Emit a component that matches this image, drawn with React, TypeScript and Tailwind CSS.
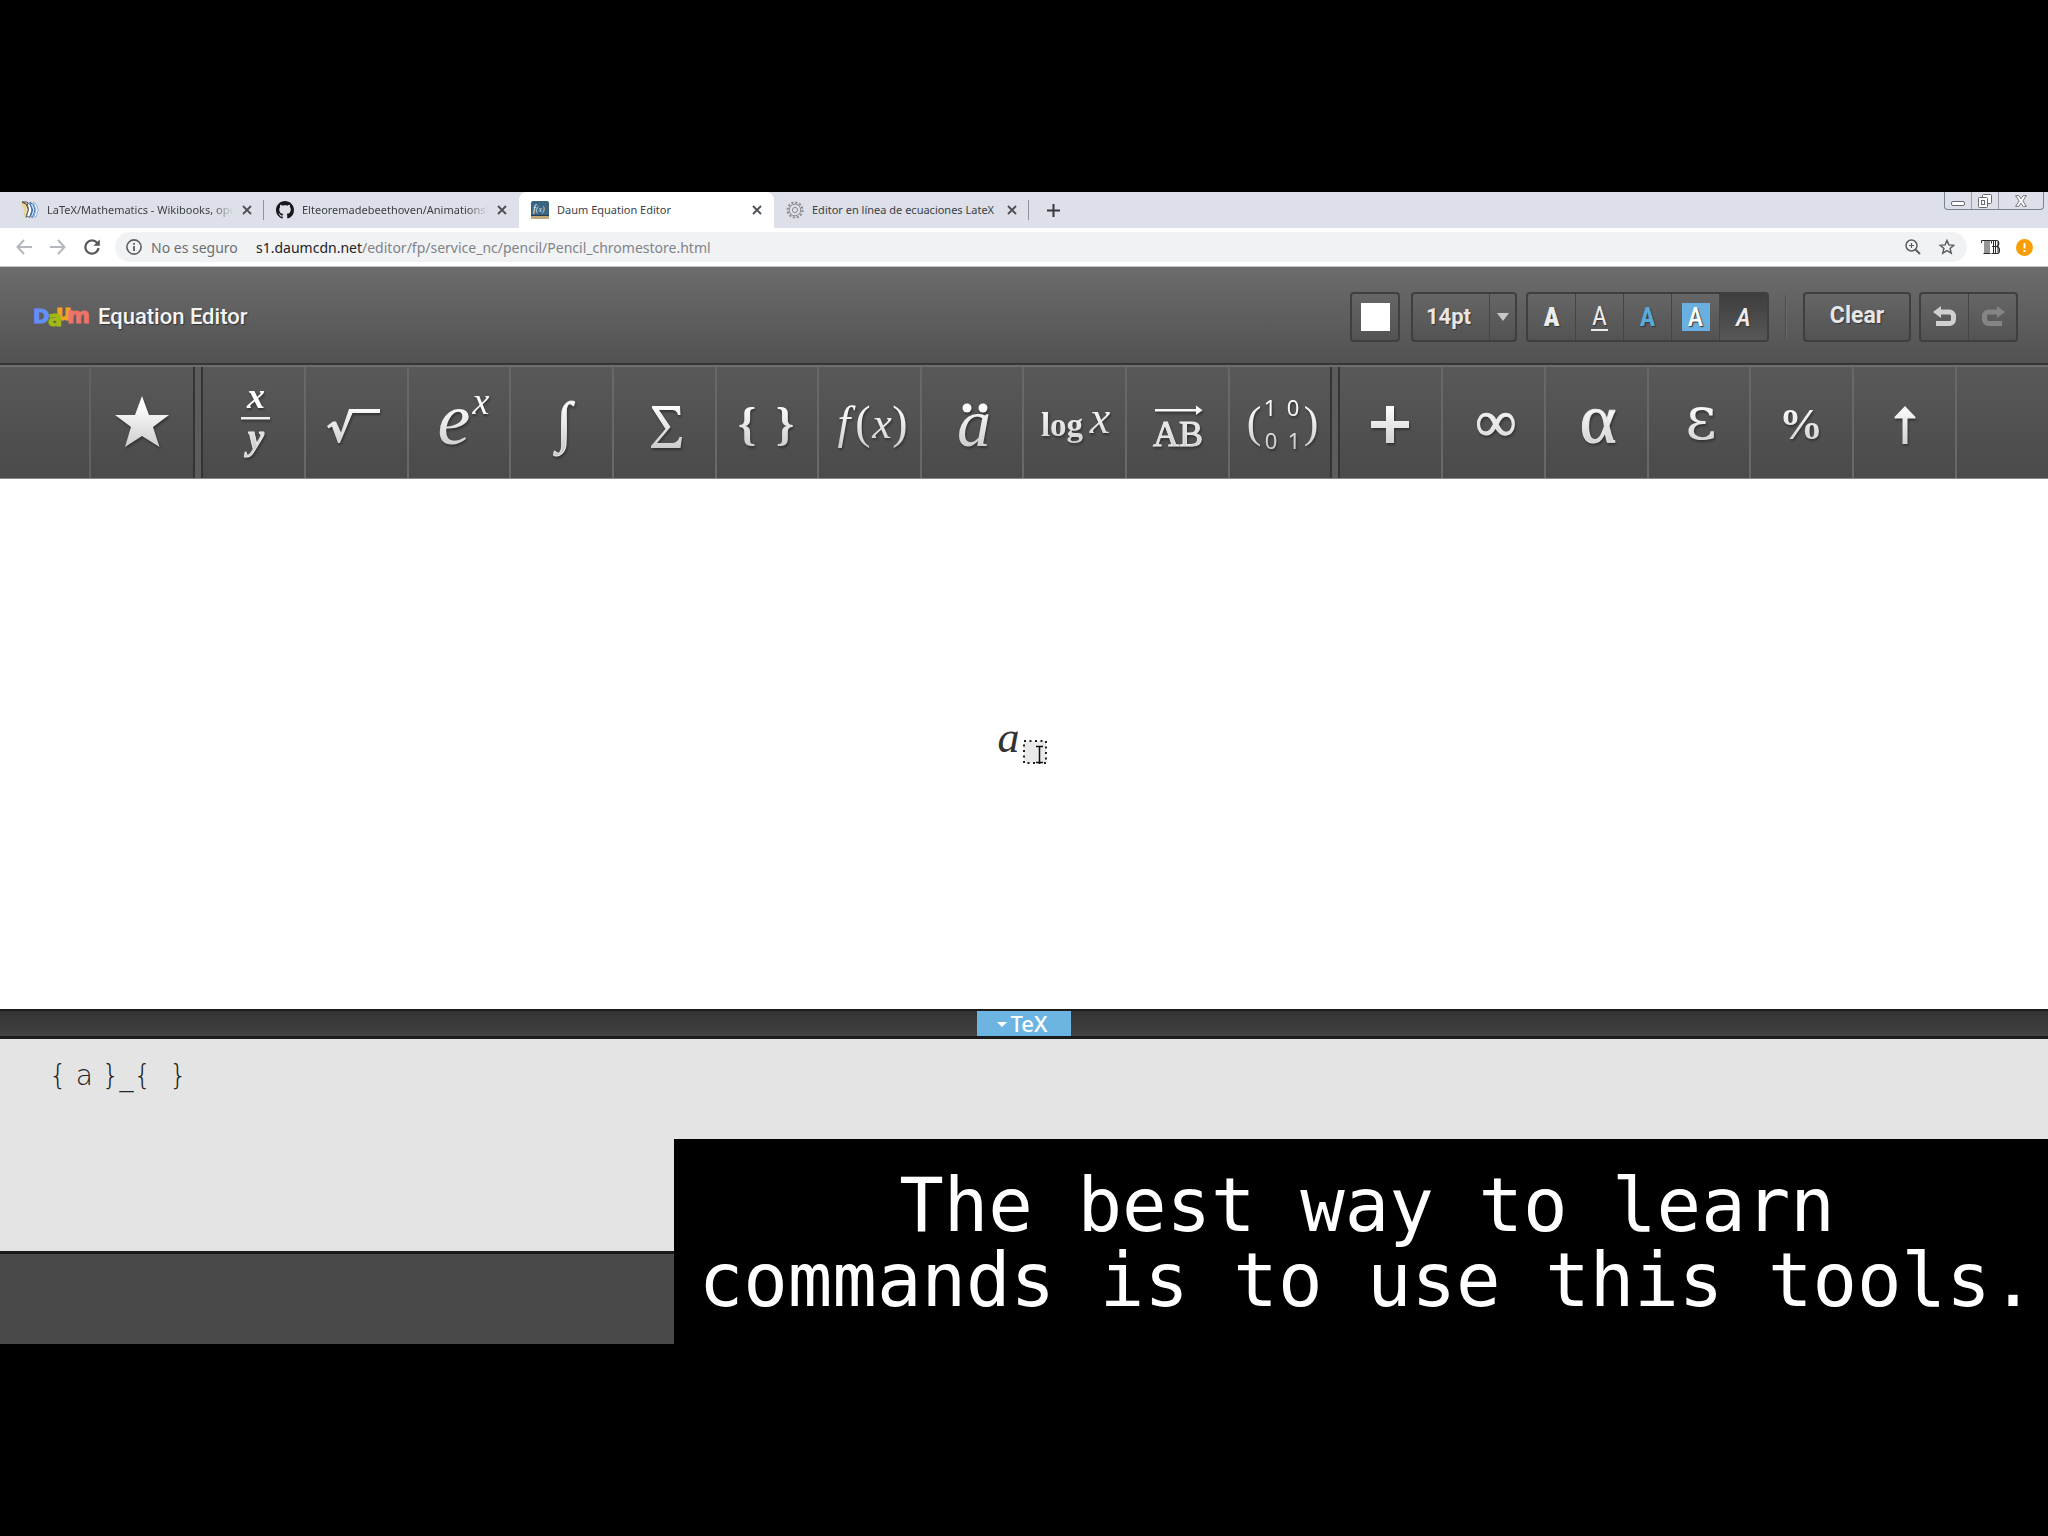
import React, { useState } from 'react';

const UI = "font-['Noto_Sans',sans-serif]";
const SERIF = "'Liberation Serif', serif";

/* ---------- browser chrome icons ---------- */

function WikibooksIcon() {
  return (
    <svg className="h-[18px] w-[18px] shrink-0" viewBox="0 0 18 18" fill="none">
      <path d="M0 1.500h5l1 4-1 4 2 4-1 3.500-3.500-2.500 1-3.500-1.500-4z" fill="#ecd592" />
      <path d="M1 1l4.500 2.500L7.500 9 5 16.500M1 1h4.500" stroke="#3c3a32" strokeWidth="1" />
      <path d="M6 1l3.500 3 1.500 5-2.500 7.500-3-2 2-5.500z" fill="#ffffff" stroke="#4b5a6a" strokeWidth="1" />
      <path d="M9 1l3.500 3 1.500 5-2.500 7.500-2-1 2.200-6.500-2-5z" fill="#cfe3f7" stroke="#3f6ea3" strokeWidth="1" />
      <path d="M12.500 1l3 3 1.700 5-2.400 7.500-1.800-1 2-6.500-1.700-5z" fill="#ffffff" stroke="#7fb2e5" strokeWidth="1" />
    </svg>
  );
}

function GithubIcon() {
  return (
    <svg className="h-[18px] w-[18px] shrink-0" viewBox="0 0 16 16" fill="#16181c">
      <path d="M8 0C3.580 0 0 3.580 0 8c0 3.540 2.290 6.530 5.470 7.590.4.070.55-.17.55-.38 0-.19-.01-.82-.01-1.490-2.010.37-2.530-.49-2.690-.94-.09-.23-.48-.94-.82-1.130-.28-.15-.68-.52-.01-.53.63-.01 1.080.58 1.230.82.72 1.210 1.870.87 2.330.66.07-.52.28-.87.51-1.070-1.780-.2-3.640-.89-3.640-3.950 0-.87.31-1.590.82-2.150-.08-.2-.36-1.020.08-2.120 0 0 .67-.21 2.200.82.64-.18 1.320-.27 2-.27s1.360.09 2 .27c1.530-1.040 2.200-.82 2.200-.82.44 1.100.16 1.920.08 2.120.51.56.82 1.270.82 2.150 0 3.070-1.870 3.750-3.650 3.950.29.25.54.73.54 1.480 0 1.070-.01 1.930-.01 2.200 0 .21.15.46.55.38A8.010 8.010 0 0 0 16 8c0-4.420-3.580-8-8-8z" />
    </svg>
  );
}

function FunctionIcon() {
  return (
    <svg className="h-[18px] w-[18px] shrink-0" viewBox="0 0 18 18">
      <rect width="18" height="18" rx="2" fill="#3a6580" />
      <rect y="14" width="18" height="1" fill="#243e50" />
      <rect y="15" width="18" height="3" rx="1" fill="#c0a878" />
      <text x="2" y="11" fontFamily={SERIF} fontStyle="italic" fontSize="10" fill="#ffffff">
        f<tspan fontSize="8" fill="#dfe8ee">(x)</tspan>
      </text>
    </svg>
  );
}

function GearIcon() {
  return (
    <svg className="h-[18px] w-[18px] shrink-0" viewBox="0 0 18 18" fill="none" stroke="#8b8d92">
      <circle cx="9" cy="9" r="7.500" strokeWidth="2" strokeDasharray="2.200 1.727" />
      <circle cx="9" cy="9" r="5.800" strokeWidth="1" />
      <circle cx="9" cy="9" r="2.600" strokeWidth="1" />
    </svg>
  );
}

function Cross() {
  return (
    <svg className="h-[10px] w-[10px]" viewBox="0 0 10 10" stroke="#4c4f54" strokeWidth="1.800">
      <path d="M1 1l8 8M9 1l-8 8" />
    </svg>
  );
}

type TabProps = { icon: React.ReactNode; title: string; active?: boolean; line?: boolean; fade?: boolean };

function Tab({ icon, title, active, line, fade }: TabProps) {
  return (
    <div className={'flex h-full w-[255px] items-center pl-3 ' + (active ? 'rounded-t-lg bg-white' : '')}>
      <button className="flex min-w-0 flex-1 items-center gap-2 text-left" role="tab" aria-selected={!!active}>
        {icon}
        <span
          className={
            'block min-w-0 flex-1 overflow-hidden text-[11px] leading-5 whitespace-nowrap text-[#3c3f44] ' +
            (fade ? '[mask-image:linear-gradient(to_right,black_88%,transparent_99%)]' : '')
          }
        >
          {title}
        </span>
      </button>
      <button className="mr-2 ml-1 flex w-4 justify-center" aria-label={'Close ' + title}>
        <Cross />
      </button>
      <span className={line ? 'h-5 w-px bg-[#8f9298]' : 'h-5 w-px'} />
    </div>
  );
}

function TabStrip() {
  return (
    <div className="flex h-9 items-stretch bg-[#dde0e8] pl-[9px]">
      <Tab icon={<WikibooksIcon />} title="LaTeX/Mathematics - Wikibooks, open books" fade line />
      <Tab icon={<GithubIcon />} title="Elteoremadebeethoven/AnimationsWithManim" fade />
      <Tab icon={<FunctionIcon />} title="Daum Equation Editor" active />
      <Tab icon={<GearIcon />} title="Editor en línea de ecuaciones LateX" line />
      <button className="flex w-12 items-center justify-center" aria-label="New tab">
        <svg className="h-[13px] w-[13px]" viewBox="0 0 13 13" stroke="#34373b" strokeWidth="2">
          <path d="M6.500 0v13M0 6.500h13" />
        </svg>
      </button>
      <div className="mr-1 ml-auto flex h-[18px] rounded-b-sm border border-t-0 border-[#7e828b]">
        <button className="flex w-[27px] items-center justify-center border-r border-[#9a9ea6]" aria-label="Minimize">
          <svg className="h-[14px] w-[14px]" viewBox="0 0 14 14" fill="#fff" stroke="#666a72">
            <rect x="0.500" y="7.500" width="13" height="4" rx="1.500" />
          </svg>
        </button>
        <button className="flex w-[27px] items-center justify-center border-r border-[#9a9ea6]" aria-label="Restore">
          <svg className="h-[14px] w-[14px]" viewBox="0 0 14 14" fill="#fff" stroke="#666a72">
            <rect x="4.500" y="0.500" width="9" height="9" rx="1" />
            <rect x="0.500" y="3.500" width="9" height="10" rx="1" />
            <rect x="3.500" y="6.500" width="3" height="4" />
          </svg>
        </button>
        <button className="flex w-[44px] items-center justify-center" aria-label="Close window">
          <svg className="h-3 w-3" viewBox="0 0 12 12" fill="#fff" stroke="#666a72" strokeWidth="0.900">
            <path d="M.6.600h3.200L6 3.700 8.200.600h3.200L7.800 6l3.600 5.400H8.200L6 8.300l-2.200 3.100H.6L4.200 6z" />
          </svg>
        </button>
      </div>
    </div>
  );
}

function AddressBar() {
  return (
    <div className="flex h-[39px] items-center border-b border-[#c4c4c4] bg-white pr-[15px] pl-4">
      <button aria-label="Back">
        <svg className="h-4 w-4" viewBox="0 0 16 16" fill="none" stroke="#b4b7bb" strokeWidth="2"><path d="M16 8H2M8 1L1.500 8 8 15" /></svg>
      </button>
      <button className="ml-[18px]" aria-label="Forward">
        <svg className="h-4 w-4" viewBox="0 0 16 16" fill="none" stroke="#b4b7bb" strokeWidth="2"><path d="M0 8h14M8 1l6.500 7L8 15" /></svg>
      </button>
      <button className="ml-[18px]" aria-label="Reload">
        <svg className="h-4 w-4" viewBox="0 0 16 16" fill="none" stroke="#55585d" strokeWidth="2.200">
          <path d="M13.600 4.600A6.600 6.600 0 1 0 14.500 9" />
          <path d="M15.800.400v6.400H9.400z" fill="#55585d" stroke="none" />
        </svg>
      </button>
      <div className="ml-[15px] flex h-[30px] flex-1 items-center rounded-full bg-[#f1f2f4] pr-3 pl-[11px]">
        <svg className="h-4 w-4 shrink-0" viewBox="0 0 16 16" fill="none" stroke="#5b5e63" strokeWidth="1.600">
          <circle cx="8" cy="8" r="7.100" />
          <path d="M8 7v5M8 4v1.800" strokeWidth="1.800" />
        </svg>
        <span className="ml-[9px] w-[86px] text-[14px] whitespace-nowrap text-[#6c6e73]">No es seguro</span>
        <a href="#address" className="ml-[19px] flex-1 text-[14px] whitespace-nowrap text-[#808388]">
          <span className="text-[#222427]">s1.daumcdn.net</span>/editor/fp/service_nc/pencil/Pencil_chromestore.html
        </a>
        <button aria-label="Zoom">
          <svg className="h-4 w-4" viewBox="0 0 16 16" fill="none" stroke="#5b5e63" strokeWidth="1.500">
            <circle cx="6.500" cy="6.500" r="5.500" /><path d="M10.500 10.500L15 15" strokeWidth="2" /><path d="M6.500 4v5M4 6.500h5" strokeWidth="1.200" />
          </svg>
        </button>
        <button className="ml-[18px]" aria-label="Bookmark this page">
          <svg className="h-4 w-4" viewBox="0 0 16 16" fill="none" stroke="#5b5e63" strokeWidth="1.500">
            <path d="M8 1.500l1.900 4.400 4.800.400-3.600 3.200 1.100 4.700L8 11.700l-4.200 2.500 1.100-4.700L1.300 6.300l4.800-.4z" />
          </svg>
        </button>
      </div>
      <button className="ml-[14px]" aria-label="TB extension">
        <svg className="h-4 w-5" viewBox="0 0 20 16" stroke="#2c2c2c" fill="none">
          <path d="M.5 4V1.500h10v3M4 1v13.500M6 1v13.500M8 1v13.500M2.500 14.500h7" strokeWidth="1" />
          <path d="M10.500 1.500h5c3 0 3 5.500 0 6 4 .500 4 7 0 7h-5" strokeWidth="1.200" />
          <path d="M12.500 1.500v13M14.500 2v12M17 3v10M11 7.500h5" strokeWidth="1" />
        </svg>
      </button>
      <button className="ml-[15px] flex h-[17px] w-[17px] items-center justify-center rounded-full bg-[#f99d08]" aria-label="Update available">
        <svg className="h-[9px] w-[3px]" viewBox="0 0 3 9" fill="#fff"><path d="M.5 0h2v5.500h-2zM.5 7h2v2h-2z" /></svg>
      </button>
    </div>
  );
}

/* ---------- editor header ---------- */

function DaumLogo() {
  return (
    <svg className="h-[26px] w-[58px] overflow-visible" viewBox="0 0 58 26" fontFamily="'DejaVu Sans', sans-serif" fontWeight="bold">
      <text x="-1" y="19" fontSize="20" fill="#648ff8" stroke="#648ff8" strokeWidth="1">D</text>
      <text x="22" y="16" fontSize="22" fill="#f2a61b" stroke="#f2a61b" strokeWidth="1">u</text>
      <text x="14" y="22" fontSize="21" fill="#a3b912" stroke="#a3b912" strokeWidth="1">a</text>
      <text x="33" y="19" fontSize="22" fill="#ee7468" stroke="#ee7468" strokeWidth="1">m</text>
    </svg>
  );
}

const group =
  'flex h-[50px] overflow-hidden rounded-[4px] border-2 border-[#3f3f3f] bg-linear-to-b from-[#666666] to-[#535353]';
const cell =
  "flex flex-1 items-center justify-center font-['Roboto_Condensed','Roboto',sans-serif] text-[26px] leading-none [text-shadow:1px_1px_1px_#333]";

function Header() {
  const [size, setSize] = useState('14pt');
  return (
    <header className="flex h-[98px] items-center border-b-2 border-[#363435] bg-linear-to-b from-[#6c6c6c] to-[#525252] pt-[3px] pr-[30px] pl-[34px] font-['Roboto',sans-serif]">
      <DaumLogo />
      <h1 className="ml-[6px] text-[22px] leading-none font-medium text-[#f4f4f4] [text-shadow:1px_1px_1px_#333]">Equation Editor</h1>
      <div className={group + ' ml-auto w-[50px] items-center justify-center'}>
        <button className="h-[28px] w-[29px] bg-white" aria-label="Text colour" />
      </div>
      <div className={group + ' relative ml-[11px] w-[106px]'}>
        <select
          aria-label="Font size"
          value={size}
          onChange={(e) => setSize(e.target.value)}
          className="w-full appearance-none bg-transparent pl-[13px] text-[22px] font-bold text-[#e6e6e6] [text-shadow:1px_1px_1px_#333]"
        >
          <option>14pt</option>
          <option>18pt</option>
          <option>24pt</option>
        </select>
        <span className="pointer-events-none absolute inset-y-0 right-0 flex w-[26px] items-center justify-center border-l border-[#454545]">
          <svg className="h-2 w-3" viewBox="0 0 12 8" fill="#c8c8c8"><path d="M0 0h12L6 8z" /></svg>
        </span>
      </div>
      <div className={group + ' ml-[9px] w-[243px] divide-x divide-[#454545]'}>
        <button className={cell + ' font-black text-[#ececec]'}>A</button>
        <button className={cell + ' text-[#ececec]'}><span className="border-b-2 border-[#ececec] px-px">A</span></button>
        <button className={cell + ' font-bold text-[#5aa9dc]'}>A</button>
        <button className={cell + ' text-white'}><span className="flex h-7 w-7 items-center justify-center bg-[#69afdf] font-medium">A</span></button>
        <button className={cell + ' bg-linear-to-b from-[#3e3e3e] to-[#575757] font-medium text-[#ececec] italic'}>A</button>
      </div>
      <span className="ml-[16px] h-11 w-[2px] border-l border-[#4c4c4c] bg-[#6a6a6a]" />
      <button className={group + ' ml-[16px] w-[108px] items-center justify-center text-[23px] font-bold text-[#e6e6e6] [text-shadow:1px_1px_1px_#333]'}>
        Clear
      </button>
      <div className={group + ' ml-[8px] w-[99px] divide-x divide-[#454545]'}>
        <button className={cell} aria-label="Undo">
          <svg className="h-[22px] w-6" viewBox="0 0 24 22" fill="none"><path d="M5 6h11.500a4 4 0 0 1 4 4v3.500a4 4 0 0 1-4 4H3" stroke="#cfcfcf" strokeWidth="5" /><path d="M0 6l8-6v12z" fill="#cfcfcf" /></svg>
        </button>
        <button className={cell} aria-label="Redo">
          <svg className="h-[22px] w-6" viewBox="0 0 24 22" fill="none"><path d="M19 6H7.500a4 4 0 0 0-4 4v3.500a4 4 0 0 0 4 4H21" stroke="#858585" strokeWidth="5" /><path d="M24 6l-8-6v12z" fill="#858585" /></svg>
        </button>
      </div>
    </header>
  );
}

/* ---------- symbol palette ---------- */

type GlyphProps = { x: number; y: number; s: number; t: string; b?: boolean; n?: boolean; f?: string; w?: number };

function G({ x, y, s, t, b, n, f, w }: GlyphProps) {
  return (
    <text
      x={x}
      y={y}
      fontSize={s}
      textAnchor="middle"
      fontFamily={f || SERIF}
      fontWeight={b ? 700 : 400}
      fontStyle={n ? 'normal' : 'italic'}
      stroke={w ? '#e8e8e8' : 'none'}
      strokeWidth={w || 0}
    >
      {t}
    </text>
  );
}

const SANS = "'Noto Sans', sans-serif";

const STAR: [string, React.ReactNode] = ['Favourites', <path key="p" d="M51 29l7 19h20L62 60l6.500 20L51 69 34 80l6-20-16-12h20z" />];

const STRUCTURES: [string, React.ReactNode][] = [
  ['Fraction', <><G x={53} y={41} s={36} t="x" b /><rect x="38" y="50" width="29" height="2.500" /><G x={53} y={82} s={36} t="y" b w={1} /></>],
  ['Root', <path key="p" d="M22 59l6-4.500h3l5 11L44 42h31v4H47.500L35 76h-2L27 59.500l-3.500 2z" />],
  ['Exponent', <><G x={46} y={77} s={74} t="e" /><G x={73} y={47} s={38} t="x" /></>],
  ['Integral', <G key="g" x={53} y={74} s={56} t="∫" n w={1} />],
  ['Sum', <path key="p" d="M39 39h28l.500 9h-2.500c-1-4-3-5-7-5H46l11.500 17L44 76h14c5 0 7-2 8.500-6H69l-1.500 11H38v-2l14.500-17L39 41z" />],
  ['Brackets', <><G x={31} y={72} s={46} t="{" n b /><G x={69} y={72} s={46} t="}" n b /></>],
  ['Function', <><G x={25} y={71} s={46} t="f" /><G x={44} y={71} s={46} t="(" n /><G x={63} y={71} s={44} t="x" /><G x={81} y={71} s={46} t=")" n /></>],
  ['Accent', <><G x={53} y={79} s={68} t="a" /><circle cx="46" cy="41" r="4.500" /><circle cx="62" cy="41" r="4.500" /></>],
  ['Logarithm', <><G x={38} y={69} s={33} t="log" b n /><G x={76} y={66} s={46} t="x" /></>],
  ['Vector', <><rect x="29" y="42" width="42" height="2.500" /><path d="M70 38.500l6.500 4.800-6.500 4.700z" /><G x={52} y={79} s={36} t="AB" n w={1} /></>],
  ['Matrix', <><G x={25} y={70} s={44} t="(" n /><G x={41} y={49} s={22} t="1" n f={SANS} /><G x={64} y={49} s={22} t="0" n f={SANS} /><G x={42} y={82} s={22} t="0" n f={SANS} /><G x={65} y={82} s={22} t="1" n f={SANS} /><G x={82} y={70} s={44} t=")" n /></>],
];

const SYMBOLS: [string, React.ReactNode][] = [
  ['Operators', <path key="p" d="M46 39h8v15h15v7H54v15h-8V61H31v-7h15z" />],
  ['Infinity', <G key="g" x={53} y={74} s={58} t="∞" n w={1} />],
  ['Greek', <G key="g" x={53} y={75} s={70} t="α" n w={1} />],
  ['Variants', <G key="g" x={53} y={72} s={60} t="ε" n f="'DejaVu Serif', serif" />],
  ['Percent', <G key="g" x={50} y={72} s={44} t="%" n b />],
  ['Arrows', <path key="p" d="M51 39L61.500 50v1.500H53.500V77h-5V51.500H40.500V50z" />],
];

function Palette({ items }: { items: [string, React.ReactNode][] }) {
  return (
    <>
      {items.map(([label, art]) => (
        <button
          key={label}
          aria-label={label}
          className="flex h-full min-w-0 flex-1 justify-center border-r-2 border-[#686868] last:border-r-0"
        >
          <svg className="h-[110px] w-[102px] shrink-0 drop-shadow-[1px_2px_1px_#333]" viewBox="0 0 102 110" fill="url(#metal)">
            {art}
          </svg>
        </button>
      ))}
    </>
  );
}

function Divider() {
  return <span className="w-[10px] border-x-2 border-[#343434] bg-[#5c5c5c]" />;
}

function PaletteBar() {
  return (
    <nav className="flex h-[114px] border-t-2 border-b border-t-[#6d6d6d] border-b-[#8a8a8a] bg-linear-to-b from-[#595959] to-[#4a4a4a]">
      <svg className="absolute h-0 w-0" aria-hidden="true">
        <linearGradient id="metal" gradientUnits="userSpaceOnUse" x1="0" y1="25" x2="0" y2="88">
          <stop offset="0.200" stopColor="#ffffff" />
          <stop offset="1" stopColor="#c4c4c4" />
        </linearGradient>
      </svg>
      <span className="w-[91px] border-r-2 border-[#626262]" />
      <div className="flex min-w-0 flex-[1]"><Palette items={[STAR]} /></div>
      <Divider />
      <div className="flex min-w-0 flex-[11]"><Palette items={STRUCTURES} /></div>
      <Divider />
      <div className="flex min-w-0 flex-[6]"><Palette items={SYMBOLS} /></div>
      <span className="w-[93px] border-l-2 border-[#686868]" />
    </nav>
  );
}

/* ---------- canvas and TeX source ---------- */

function Canvas() {
  return (
    <main className="flex flex-1 items-center justify-center bg-white">
      <div className="flex items-end gap-[3px] pr-1 pb-2 font-['Liberation_Serif',serif] text-[44px] leading-none text-[#333] italic">
        <span className="mb-1">a</span>
        <svg className="h-6 w-6" viewBox="0 0 24 24" fill="none">
          <rect x="1" y="1" width="22" height="22" fill="#e9e9e9" stroke="#222" strokeWidth="2" strokeDasharray="2 3.500" />
          <path d="M13 6.500h7M16.500 6.500v16M13 22.500h7" stroke="#111" strokeWidth="1.500" />
        </svg>
      </div>
    </main>
  );
}

export default function App() {
  const [tex, setTex] = useState('{ a }_{  }');
  return (
    <div className="flex min-h-screen flex-col bg-black py-48">
      <div className={UI}>
        <TabStrip />
        <AddressBar />
      </div>
      <Header />
      <PaletteBar />
      <Canvas />
      <div className="flex h-[30px] justify-center border-t-2 border-b-3 border-[#1c1c1c] bg-linear-to-b from-[#333333] to-[#424242]">
        <button className="flex w-[94px] items-center justify-center gap-1 bg-[#6cb4e2] pr-1 pb-0.5 font-['Noto_Sans',sans-serif] text-[22px] leading-none font-medium text-white">
          <svg className="mt-1 h-[5px] w-[10px]" viewBox="0 0 10 5" fill="#fff"><path d="M0 0h10L5 5z" /></svg>
          TeX
        </button>
      </div>
      <div className="relative">
        <textarea
          aria-label="TeX source"
          value={tex}
          onChange={(e) => setTex(e.target.value)}
          className="block h-[212px] w-full resize-none bg-[#e4e4e4] px-[49px] pt-5 font-['DejaVu_Sans',sans-serif] text-[28px] leading-[34px] font-extralight text-[#222] outline-none"
        />
        <div className="h-[93px] border-t-3 border-[#1a1a1a] bg-[#494949]" />
        <p className="absolute right-0 bottom-0 h-[205px] w-[1374px] bg-black pt-[29px] pl-3 text-center font-['DejaVu_Sans_Mono',monospace] text-[74px] leading-[75px] text-white">
          The best way to learn
          <br />
          commands is to use this tools.
        </p>
      </div>
    </div>
  );
}
